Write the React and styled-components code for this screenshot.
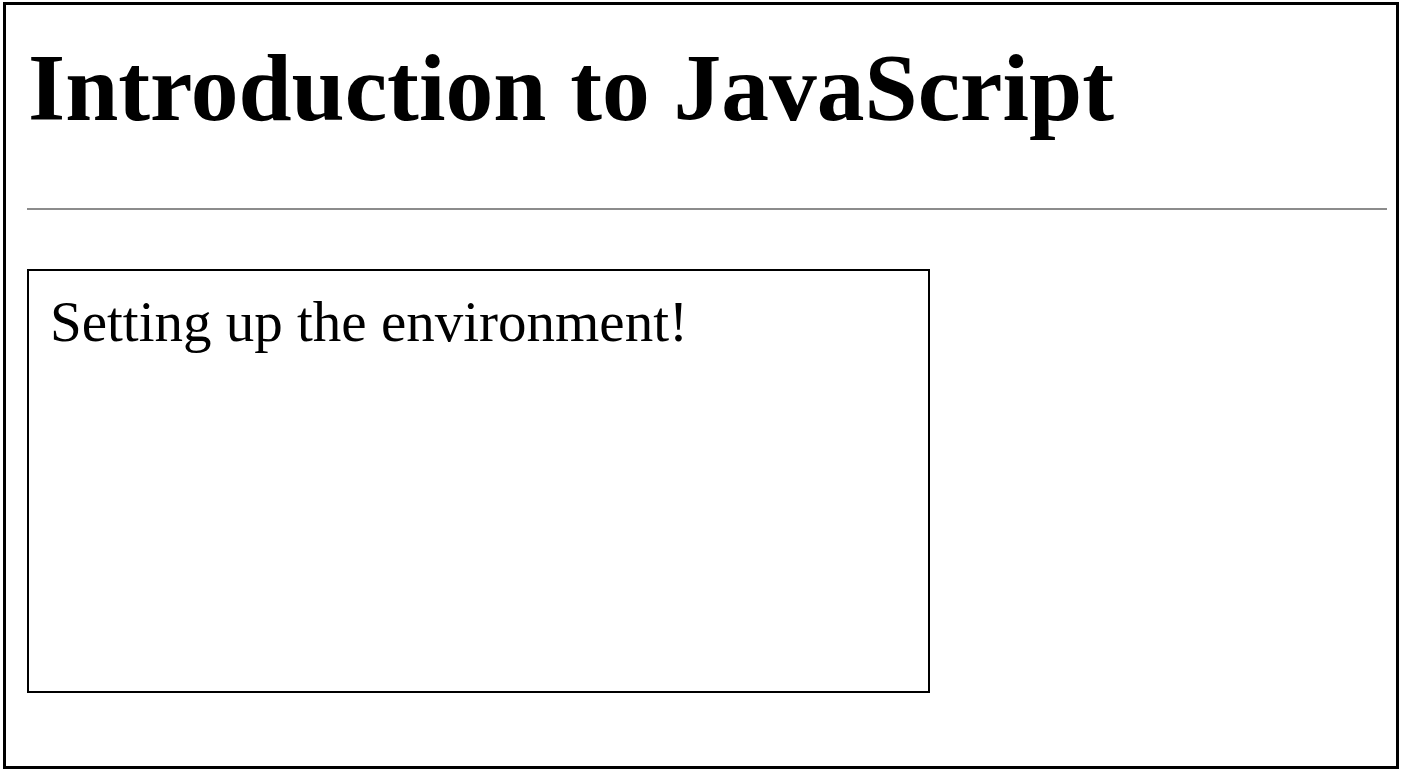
import React from "react";
import styled, { createGlobalStyle } from "styled-components";

const GlobalStyle = createGlobalStyle`
  html, body {
    margin: 0;
    padding: 0;
    background: #ffffff;
  }
  body {
    font-family: "Liberation Serif", "Times New Roman", serif;
    color: #000000;
  }
`;

const Frame = styled.div`
  box-sizing: border-box;
  width: 1396px;
  height: 767px;
  margin: 2px 0 0 3px;
  border: 3px solid #000000;
  padding: 0 9px 0 21px;
  display: flex;
  flex-direction: column;
`;

const Title = styled.h1`
  margin: 28px 0 0 1px;
  font-size: 95.5px;
  line-height: 110px;
  font-weight: bold;
`;

const Rule = styled.hr`
  margin: 65px 0 0;
  border: none;
  height: 2px;
  background: #8c8c8c;
`;

const Card = styled.div`
  box-sizing: border-box;
  margin-top: 59px;
  width: 903px;
  height: 424px;
  border: 2px solid #000000;
  padding: 19px 0 0 21px;
`;

const CardText = styled.p`
  margin: 0;
  font-size: 57px;
  line-height: 64px;
`;

export default function App() {
  return (
    <>
      <GlobalStyle />
      <Frame>
        <Title>Introduction to JavaScript</Title>
        <Rule />
        <Card>
          <CardText>Setting up the environment!</CardText>
        </Card>
      </Frame>
    </>
  );
}
